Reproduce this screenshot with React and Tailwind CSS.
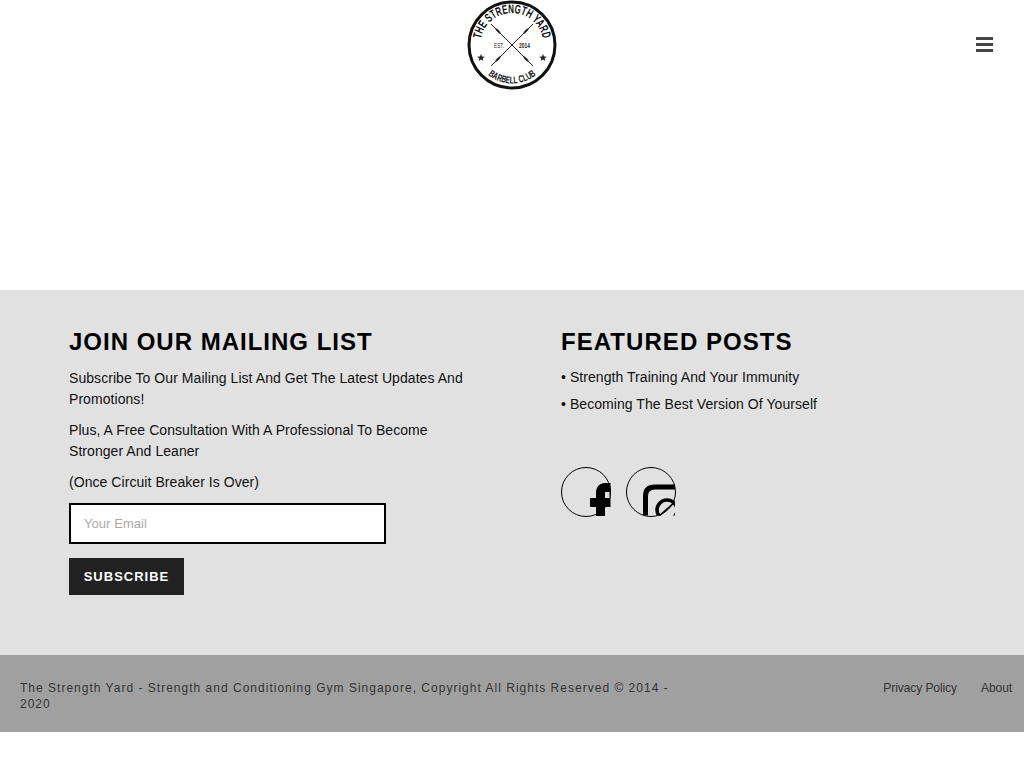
const sans = { fontFamily: '"Liberation Sans", Arial, sans-serif' };

function Logo() {
  return (
    <svg width="90" height="90" viewBox="0 0 90 90" className="block">
      <defs>
        <path id="topArc" d="M 14 39 A 31.5 31.5 0 0 1 76 39" />
        <path id="bottomArc" d="M 21 75 A 38 38 0 0 0 69 75" />
      </defs>
      <circle cx="45" cy="45" r="43" fill="#fff" stroke="#111" strokeWidth="3" />
      <text fontSize="12.5" fontWeight="700" fill="#111" style={sans}>
        <textPath href="#topArc" textLength="87" lengthAdjust="spacingAndGlyphs">THE STRENGTH YARD</textPath>
      </text>
      <text fontSize="10" fontWeight="700" fill="#111" style={sans}>
        <textPath href="#bottomArc" textLength="52" lengthAdjust="spacingAndGlyphs">BARBELL CLUB</textPath>
      </text>
      <line x1="24" y1="24" x2="66" y2="66" stroke="#222" strokeWidth="1" />
      <line x1="66" y1="24" x2="24" y2="66" stroke="#222" strokeWidth="1" />
      <line x1="29" y1="29" x2="33" y2="33" stroke="#222" strokeWidth="2" />
      <line x1="61" y1="29" x2="57" y2="33" stroke="#222" strokeWidth="2" />
      <line x1="29" y1="61" x2="33" y2="57" stroke="#222" strokeWidth="2" />
      <line x1="61" y1="61" x2="57" y2="57" stroke="#222" strokeWidth="2" />
      <text x="32" y="47.5" fontSize="6.5" fill="#222" textAnchor="middle" textLength="10" lengthAdjust="spacingAndGlyphs" style={sans}>EST.</text>
      <text x="57.5" y="47.5" fontSize="6.5" fontWeight="700" fill="#222" textAnchor="middle" textLength="11" lengthAdjust="spacingAndGlyphs" style={sans}>2014</text>
      <path d="M14 54 L15 56.6 L17.8 56.7 L15.6 58.4 L16.4 61 L14 59.5 L11.6 61 L12.4 58.4 L10.2 56.7 L13 56.6 Z" fill="#222" />
      <path d="M76 54 L77 56.6 L79.8 56.7 L77.6 58.4 L78.4 61 L76 59.5 L73.6 61 L74.4 58.4 L72.2 56.7 L75 56.6 Z" fill="#222" />
    </svg>
  );
}

function MenuIcon() {
  return (
    <div className="flex w-[17px] flex-col gap-[3px]">
      <div className="h-[3px] bg-[#444]"></div>
      <div className="h-[3px] bg-[#444]"></div>
      <div className="h-[3px] bg-[#444]"></div>
    </div>
  );
}

function FacebookIcon() {
  return (
    <svg width="50" height="50" viewBox="0 0 50 50" className="block">
      <circle cx="25" cy="25" r="24.5" fill="none" stroke="#000" strokeWidth="1" />
      <path d="M29 31 H35 V26 C35 19.5 39 16 44 16 H49.5 V31 H49.5 V40 H44 V49 H35 V40 H29 Z" fill="#000" />
      <rect x="44" y="25" width="4.5" height="6" fill="#e1e1e1" />
    </svg>
  );
}

function InstagramIcon() {
  return (
    <svg width="50" height="50" viewBox="0 0 50 50" className="block">
      <defs>
        <clipPath id="igClip">
          <rect x="0" y="0" width="49" height="48.5" />
        </clipPath>
      </defs>
      <circle cx="25" cy="25" r="24.5" fill="none" stroke="#000" strokeWidth="1" />
      <g clipPath="url(#igClip)">
        <path d="M19.5 50 V29 C19.5 23 23 20 29 20 H50" fill="none" stroke="#000" strokeWidth="5" />
        <circle cx="41" cy="43" r="10" fill="none" stroke="#000" strokeWidth="3.5" />
        <path d="M33 49 L50 34" fill="none" stroke="#000" strokeWidth="1.5" />
      </g>
    </svg>
  );
}

function App() {
  return (
    <div className="min-h-screen bg-white text-[14px] leading-[21px] tracking-[0.06px] text-[#111]" style={sans}>
      <header className="relative flex h-[290px] justify-center bg-white">
        <Logo />
        <button className="absolute right-[31px] top-[37px]">
          <MenuIcon />
        </button>
      </header>

      <section className="flex h-[365px] bg-[#e1e1e1] pl-[69px] pt-[38px]">
        <div className="w-[492px]">
          <h2 className="mb-[12px] text-[24px] font-bold leading-[28px] tracking-[1px] text-black">JOIN OUR MAILING LIST</h2>
          <div className="w-[410px]">
            <p className="mb-[10px]">Subscribe To Our Mailing List And Get The Latest Updates And Promotions!</p>
            <p className="mb-[10px]">Plus, A Free Consultation With A Professional To Become Stronger And Leaner</p>
            <p className="mb-[10px]">(Once Circuit Breaker Is Over)</p>
          </div>
          <input
            type="text"
            placeholder="Your Email"
            className="block h-[41px] w-[317px] border-2 border-black bg-white px-[13px] text-[13px] outline-none placeholder:text-[#aaa]"
          />
          <button className="mt-[14px] block h-[37px] w-[115px] bg-[#222] text-[13px] font-bold tracking-[1px] text-white">SUBSCRIBE</button>
        </div>
        <div>
          <h2 className="mb-[11px] text-[24px] font-bold leading-[28px] tracking-[1.05px] text-black">FEATURED POSTS</h2>
          <p className="mb-[6px]">• Strength Training And Your Immunity</p>
          <p>• Becoming The Best Version Of Yourself</p>
          <div className="mt-[52px] flex gap-[15px]">
            <FacebookIcon />
            <InstagramIcon />
          </div>
        </div>
      </section>

      <footer className="flex h-[77px] justify-between bg-[#a0a0a0] pl-[20px] pr-[12px] pt-[25px] text-[12px] leading-[16px] tracking-normal text-[#333]">
        <p className="w-[660px] tracking-[1.01px]">The Strength Yard - Strength and Conditioning Gym Singapore, Copyright All Rights Reserved © 2014 - 2020</p>
        <nav className="flex gap-[24px] tracking-[-0.07px]">
          <span>Privacy Policy</span>
          <span>About</span>
        </nav>
      </footer>
    </div>
  );
}

export default App;
